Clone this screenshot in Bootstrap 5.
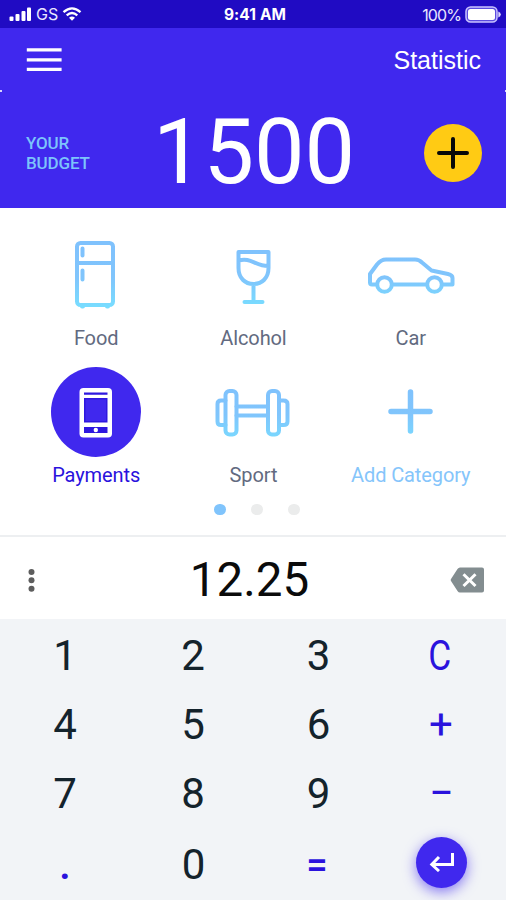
<!DOCTYPE html>
<html lang="en">
<head>
<meta charset="utf-8">
<meta name="viewport" content="width=device-width, initial-scale=1">
<title>Budget</title>
<link href="https://cdn.jsdelivr.net/npm/bootstrap@5.3.0/dist/css/bootstrap.min.css" rel="stylesheet">
<style>
:root{--brand:#4028ee;--sky:#80c4fc;--ink:#2a12dd}
body{font-family:Roboto,"Liberation Sans",sans-serif;background:#fff;overflow:hidden}
.screen{width:506px;height:900px}
.status{height:28px;background:#200bc3;font-family:Inter,"Liberation Sans",sans-serif;font-size:16px;line-height:28px;color:#e9e6ff;padding:0 5px 0 9px}
.status .side{flex:1 1 0}
.pct{letter-spacing:-.9px;margin-top:2px}
.clock{font-weight:700;color:#fff;letter-spacing:.1px;font-size:15.5px;padding-top:1px}
.topbar{height:62px;background:var(--brand);padding:0 25px 0 26px}
.topbar a{font:25px "Liberation Sans",Arial,sans-serif;color:#fff;text-decoration:none;padding-top:2px}
.budget{height:118px;background:var(--brand);padding:0 24px 0 26px}
.budget::before,.budget::after{content:"";position:absolute;top:0;left:0;width:2px;height:2px;background:#d8d3ff}
.budget::after{left:auto;right:0;width:1px}
.tag{width:80px;font-size:17px;font-weight:500;line-height:19.5px;color:#7cc4fb;margin-top:9px;letter-spacing:-.15px}
.total{font-size:90px;line-height:100px;color:#fff;letter-spacing:-.1px;margin:8px 22px 0 0}
.add{width:58px;height:58px;background:#ffcb14;margin-top:7px}
.cats{height:329px;padding:22px 16px 0 17.5px;border-bottom:2px solid #edeff1;box-sizing:border-box}
.cat-grid{display:grid;grid-template-columns:repeat(3,157.3px);row-gap:16px}
.cat{color:#626a80;font-size:20px;line-height:25px;letter-spacing:-.1px}
.cat .ico{width:90px;height:90px;margin-bottom:6px}
.cat.on{color:var(--ink)}
.cat.on .ico{background:var(--brand)}
.cat.new{color:#85c5fb}
.line{fill:none;stroke:url(#sky);stroke-width:4;stroke-linecap:round;stroke-linejoin:round}
.pager{gap:25.5px;margin:15.5px 0 0 6px}
.pager i{width:11.5px;height:11.5px;background:#ebecec}
.pager i.on{background:var(--sky)}
.entry{height:82px;padding:3px 21px 0 27px}
.entry span{font-size:47.5px;line-height:60px;color:#0b0b0b;margin-right:13px}
.keys{height:281px;background:#f2f4f7;display:grid;grid-template-columns:130px 126px 125px 118px;grid-template-rows:69px 69px 69px 71px;padding-top:2px;align-items:center;justify-items:center}
.keys button{border:0;background:none;padding:0;font-size:42px;line-height:50px;color:#14232c}
.keys .op{color:var(--ink)}
.keys .cl{transform:scaleX(.84)}
.keys .dash{transform:scaleX(.86);padding-left:3px}
.keys .dot{font-weight:500;font-size:43px;margin-top:1px}
.keys .eq{font-weight:500;font-size:38px;padding-right:3px;margin-top:2px}
.keys .plus{font-size:42px;padding-left:2px}
.keys .zero{margin-top:2px;padding-left:1px}
.keys .enter{width:51px;height:51px;background:var(--brand);box-shadow:0 4px 13px rgba(64,40,238,.6);margin:-3px 0 0 3px}
</style>
<script src="https://cdn.jsdelivr.net/npm/bootstrap@5.3.0/dist/js/bootstrap.bundle.min.js"></script>
</head>
<body>
<svg width="0" height="0" class="position-absolute"><defs><linearGradient id="sky" gradientUnits="userSpaceOnUse" x1="0" y1="20" x2="0" y2="76"><stop offset="0" stop-color="#7fc2fd"/><stop offset=".5" stop-color="#80c5fc"/><stop offset="1" stop-color="#78dcff"/></linearGradient></defs></svg>
<main class="screen d-flex flex-column">
  <div class="status d-flex align-items-center">
    <div class="side d-flex align-items-center">
      <svg width="23" height="16" fill="#fff"><rect x="0.5" y="10.5" width="4" height="4.500" rx="1"/><rect x="6.500" y="8" width="4" height="7" rx="1"/><rect x="12.500" y="5" width="4" height="10" rx="1"/><rect x="18" y="1.500" width="4" height="13.500" rx="1"/></svg>
      <span class="ms-1">GS</span>
      <svg class="ms-1" width="20" height="16" fill="none" stroke="#fff" stroke-width="2.300"><path d="M1.500 6.200Q10-1.500 18.500 6.200M4.700 9.400Q10 4.600 15.300 9.400"/><path d="M7 11.800Q10 9.300 13 11.800L10 14.800Z" fill="#fff" stroke="none"/></svg>
    </div>
    <div class="clock">9:41 AM</div>
    <div class="side d-flex align-items-center justify-content-end">
      <span class="pct">100%</span>
      <svg class="ms-1" width="36" height="17"><rect x="1" y="1" width="31" height="15" rx="4.500" fill="#5c4be0" stroke="#c9c3ff" stroke-width="1.500"/><rect x="3" y="3" width="27" height="11" rx="2.500" fill="#fff"/><path d="M33.300 5.500q2.500 1 2.500 3t-2.500 3z" fill="#dcd8ff"/></svg>
    </div>
  </div>
  <nav class="topbar d-flex align-items-center justify-content-between">
    <svg width="36" height="26" stroke="#fff" stroke-width="3.200"><path d="M.8 3.800H35.600M.8 13.800H35.600M.8 23.300H35.600"/></svg>
    <a href="#">Statistic</a>
  </nav>
  <section class="budget position-relative d-flex align-items-center justify-content-between">
    <div class="tag">YOUR BUDGET</div>
    <div class="total">1500</div>
    <button class="add btn p-0 rounded-circle border-0 d-flex align-items-center justify-content-center" aria-label="Add funds"><svg width="34" height="34" stroke="#080808" stroke-width="4" stroke-linecap="round"><path d="M17 3V31M3 17H31"/></svg></button>
  </section>
  <section class="cats">
    <div class="cat-grid">
      <div class="cat d-flex flex-column align-items-center"><svg class="ico line" viewBox="0 0 90 90"><rect x="26" y="13" width="36" height="62" rx="3.500"/><path d="M26 33H62M31.500 18.500V25.500M31.500 40.500V49.500M31 76.500H32M56 76.500H57"/></svg>Food</div>
      <div class="cat d-flex flex-column align-items-center"><svg class="ico line" viewBox="0 0 90 90"><path d="M30.500 22H60.500V38C60.500 48 54 54 45.500 54S30.500 48 30.500 38ZM31 30.500C42 27 48 36 60 36M45.500 54V71.500M36.500 72H54.500"/></svg>Alcohol</div>
      <div class="cat d-flex flex-column align-items-center"><svg class="ico line" viewBox="0 0 90 90"><path d="M10 54.500H6Q4 54.500 4 52.500V44L11 34.500Q15 29.500 20 29.500H49Q53 29.500 56 32.500L65.500 40.500 82 44Q86.500 45 86.500 48V54.500H77M60 54.500H27"/><circle cx="18.500" cy="54.500" r="7.300"/><circle cx="68.500" cy="54.500" r="7.300"/></svg>Car</div>
      <div class="cat on d-flex flex-column align-items-center"><svg class="ico rounded-circle" viewBox="0 0 90 90"><rect x="28.500" y="21" width="32.500" height="49.500" rx="4" fill="#fff"/><path fill="#2e17df" d="M33 25.500H56.500V27.800H33ZM33 31H56.500V55.500H33ZM33 60H56.500V66H33Z"/><path fill="#4028ee" d="M34.500 32.500H55V54H34.500Z"/><circle cx="44.800" cy="63" r="2.200" fill="#fff"/></svg>Payments</div>
      <div class="cat d-flex flex-column align-items-center"><svg class="ico line" viewBox="0 0 90 90"><rect x="17.500" y="24" width="11" height="43.500" rx="4"/><rect x="60" y="24" width="11" height="43.500" rx="4"/><path d="M28.500 39.500H60M28.500 48.500H60M17.500 33.500H13Q9.500 33.500 9.500 37V54.500Q9.500 58 13 58H17.500M71 33.500H75.500Q79.500 33.500 79.500 37V54.500Q79.500 58 75.500 58H71"/></svg>Sport</div>
      <div class="cat new d-flex flex-column align-items-center"><svg class="ico line" viewBox="0 0 90 90" style="stroke-width:5.500"><path d="M44.500 25V64M25 44.500H64"/></svg>Add Category</div>
    </div>
    <div class="pager d-flex justify-content-center"><i class="on rounded-circle"></i><i class="rounded-circle"></i><i class="rounded-circle"></i></div>
  </section>
  <section class="entry d-flex align-items-center justify-content-between">
    <svg width="35" height="26" fill="#5d5d5d"><circle cx="4.500" cy="5" r="3"/><circle cx="4.500" cy="13.300" r="3"/><circle cx="4.500" cy="21.700" r="3"/></svg>
    <span>12.25</span>
    <svg width="35" height="26"><path d="M10 .5H32Q34 .5 34 2.500V23.500Q34 25.500 32 25.500H10Q8.500 25.500 7.500 24L1 14Q.3 13 1 12L7.500 2Q8.500 .5 10 .5Z" fill="#838d90"/><path d="M13.500 7.200 25.500 19M25.500 7.200 13.500 19" stroke="#fff" stroke-width="3"/></svg>
  </section>
  <section class="keys">
    <button>1</button><button>2</button><button>3</button><button class="op cl">C</button>
    <button>4</button><button>5</button><button>6</button><button class="op plus">+</button>
    <button>7</button><button>8</button><button>9</button><button class="op dash">–</button>
    <button class="op dot">.</button><button class="zero">0</button><button class="op eq">=</button>
    <button class="enter rounded-circle d-flex align-items-center justify-content-center" aria-label="Enter"><svg width="26" height="20" fill="none" stroke="#fff" stroke-width="3"><path d="M23.500 1V12.500H3M10 5 2.800 12.500 10 19"/></svg></button>
  </section>
</main>
</body>
</html>
